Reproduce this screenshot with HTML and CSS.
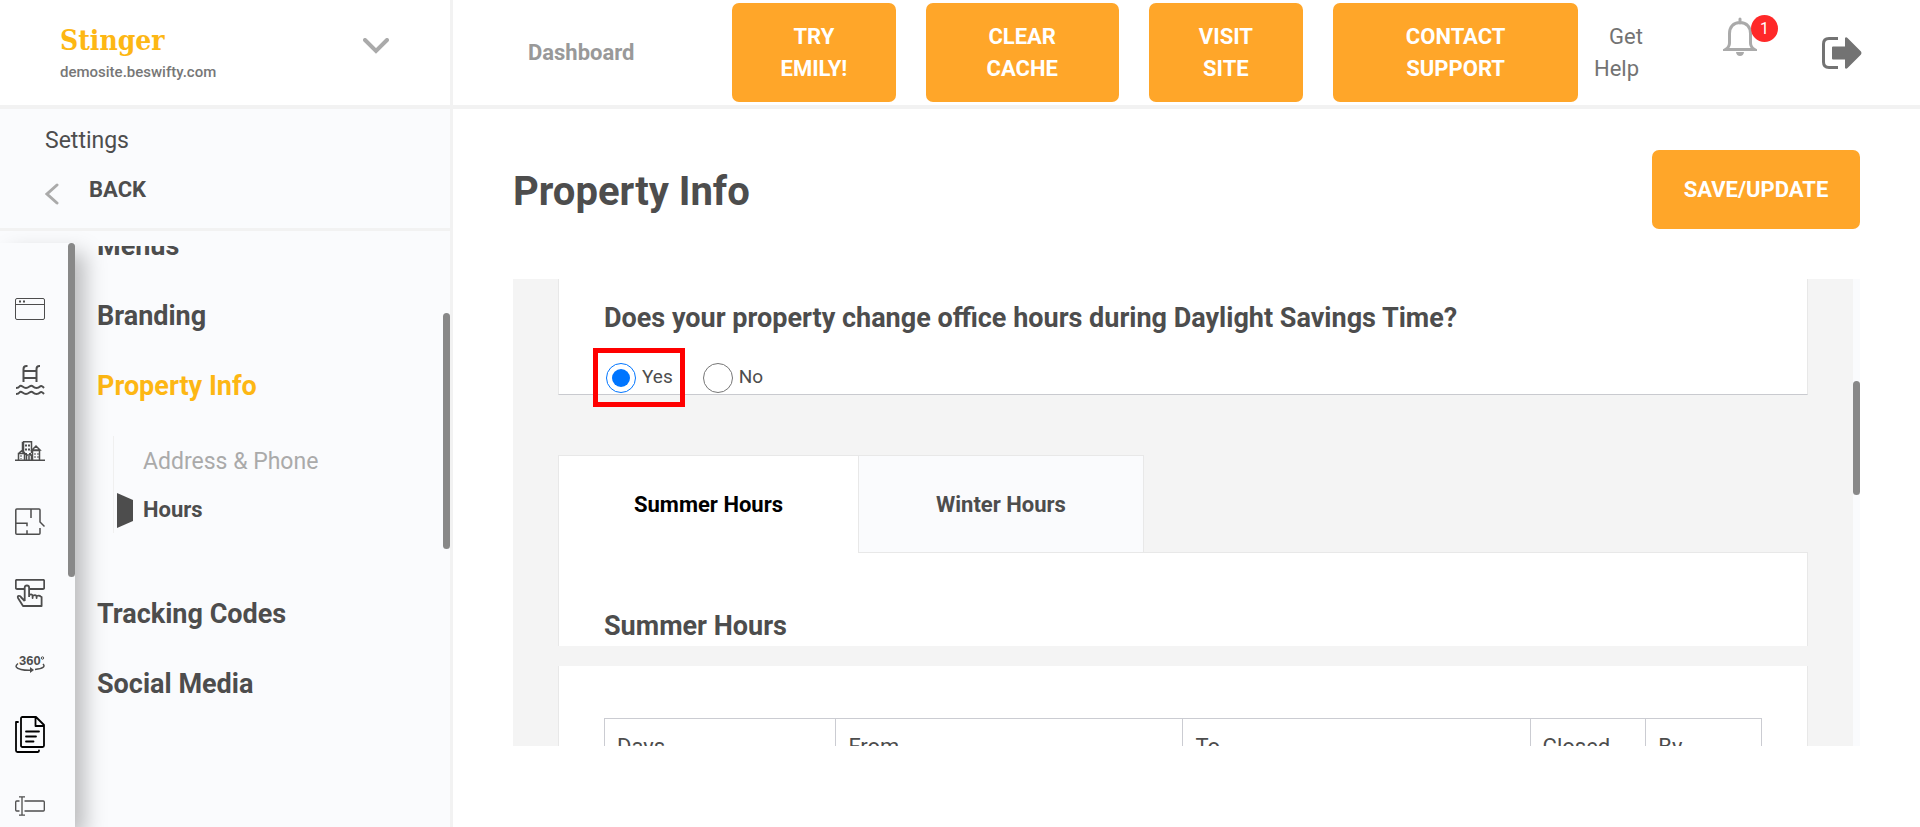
FILE: index.html
```html
<!DOCTYPE html>
<html lang="en">
<head>
    <meta charset="UTF-8">
    <meta name="viewport" content="width=device-width, initial-scale=1.0">
    <title>Property Info</title>
    <link rel="stylesheet" href="styles.css">
</head>
<body>
    <aside class="sidebar">
        <div class="site">
            <div>
                <div class="site-name">Stinger</div>
                <div class="site-url">demosite.beswifty.com</div>
            </div>
            <button class="icon-btn" aria-label="Switch site">
                <svg width="26" height="16" viewBox="0 0 26 16"><path d="M2 2l11 11L24 2" fill="none" stroke="#aaa" stroke-width="4" stroke-linecap="round"/></svg>
            </button>
        </div>
        <div class="settings">
            <div class="settings-label">Settings</div>
            <a class="back" href="#">
                <svg width="14" height="22" viewBox="0 0 14 22"><path d="M12 2L2 11l10 9" fill="none" stroke="#aaa" stroke-width="3" stroke-linecap="round"/></svg>
                <span>BACK</span>
            </a>
        </div>
        <div class="side-body">
            <nav class="rail">
                <a href="#" aria-label="Pages">
                    <svg width="30" height="22" viewBox="0 0 30 22" fill="none" stroke="#4d4d4d"><rect x=".5" y=".5" width="29" height="21" rx="1.5"/><path d="M1 6.5h28"/><path d="M4 3.5h2M8 3.5h2" stroke-width="2"/></svg>
                </a>
                <a href="#" aria-label="Amenities">
                    <svg width="30" height="30" viewBox="0 0 30 30" fill="none" stroke="#4d4d4d" stroke-width="2"><path d="M8.500 17V4q0-3 3-3h1M21.500 17V4q0-3 3-3h.5M9 6h12M9 13h12"/><path d="M1 23q2.500 0 3.500-1.500t3 0 3.500 1.500 3.500-1.500 3.500 0 3.500 1.500 3.500-1.500 4 1.500M1 29q2.500 0 3.500-1.500t3 0 3.500 1.500 3.500-1.500 3.500 0 3.500 1.500 3.500-1.500 4 1.500"/></svg>
                </a>
                <a href="#" aria-label="Neighborhood">
                    <svg width="30" height="20" viewBox="0 0 30 20" fill="none" stroke="#4d4d4d"><path d="M0 19.500h30" stroke-width="2"/><path d="M7.500 11V1.500h1V11M8 .7h8.500V12" stroke-width="1.500"/><path d="M10 4.500h5M10 8.500h5M11 12v2M15 12v2" stroke-width="2" stroke-dasharray="2 1"/><path d="M3.500 19v-6.500h6V19M4 12l2.500-2L10 12M17.500 19V9.500h7V19M17 9l4-4 4 4zM11.500 19v-5h5v5M14 15v4" stroke-width="1.500"/><path d="M6 14v4M20 12v6M23 12v6" stroke-dasharray="2 1"/></svg>
                </a>
                <a href="#" aria-label="Floor plans">
                    <svg width="30" height="28" viewBox="0 0 30 28" fill="none" stroke="#4d4d4d" stroke-width="1.500"><path d="M12 26.200v-4M7 26.200H1.800q-1 0-1-1V2q0-1 1-1H24q1 0 1 1v12l4.500 4.500M25 20v5.200q0 1-1 1H12M7 26.200h6M16 1v9M1 15.200h11v3"/></svg>
                </a>
                <a href="#" aria-label="Calls to action">
                    <svg width="30" height="28" viewBox="0 0 30 28" fill="none" stroke="#4d4d4d" stroke-width="1.800" stroke-linejoin="round"><path d="M9.500 10H2q-1.200 0-1.200-1.200V2Q.8.800 2 .8h26q1.200 0 1.200 1.200v6.800q0 1.200-1.200 1.200H14.500"/><path d="M9.700 22V8.500q0-2 2.200-2t2.200 2V18M14.100 18v-2q2.500-1.500 3.500.5V19v-2q3-2 4 .5V19v-2q3-1 4 .5l1 .5v9H8L3 19q-.8-2 1-2.200 1.500 0 2.300 1.700L9.700 22"/></svg>
                </a>
                <a href="#" aria-label="Virtual tours">
                    <svg width="30" height="18" viewBox="0 0 30 18"><text x="4" y="10" class="rail-text">360</text><circle cx="27.500" cy="3" r="1.200" fill="none" stroke="#4d4d4d"/><path d="M3 8.500Q-2 12.500 6 14.500q5 1.200 11 .7M20 14.500q12-1.500 8-5.500" fill="none" stroke="#4d4d4d" stroke-width="1.500"/><path d="M15 12l4 3-4 3z" fill="#4d4d4d"/></svg>
                </a>
                <a href="#" aria-label="Content">
                    <svg width="30" height="38" viewBox="0 0 30 38" fill="none" stroke="#000" stroke-width="1.800" stroke-linejoin="round" stroke-linecap="round"><path d="M7.500 1H21l8 8v20.500q0 1.500-1.500 1.500h-20Q6 31 6 29.500v-27Q6 1 7.500 1zM20.500 1v9H29M3 6H1v28.500Q1 36 2.500 36H23q1 0 1-1.500M11 15.500h13M11 20.500h10M11 25.500h7.500"/></svg>
                </a>
                <a href="#" aria-label="Forms">
                    <svg width="30" height="20" viewBox="0 0 30 20" fill="none" stroke="#4d4d4d"><path d="M4 .8h6M7 .8v18.400M4 19.200h6M4.500 5H1.700q-1 0-1 1v8q0 1 1 1h2.800M9.500 5h18.800q1 0 1 1v8q0 1-1 1H9.500" stroke-width="1.300"/></svg>
                </a>
                <span class="thumb rail-thumb"></span>
            </nav>
            <nav class="menu">
                <a href="#">Menus</a>
                <a href="#">Branding</a>
                <a class="active" href="#">Property Info</a>
                <div class="submenu">
                    <a href="#">Address &amp; Phone</a>
                    <a class="current" href="#">Hours</a>
                </div>
                <a href="#">Tracking Codes</a>
                <a href="#">Social Media</a>
            </nav>
            <span class="thumb menu-thumb"></span>
        </div>
    </aside>

    <div class="page">
        <header class="topbar">
            <a class="dashboard" href="#">Dashboard</a>
            <div class="actions">
                <button class="btn">TRY<br>EMILY!</button>
                <button class="btn">CLEAR<br>CACHE</button>
                <button class="btn">VISIT<br>SITE</button>
                <button class="btn">CONTACT<br>SUPPORT</button>
            </div>
            <a class="help" href="#">Get Help</a>
            <button class="icon-btn bell" aria-label="Notifications">
                <svg width="34" height="40" viewBox="0 0 34 40"><path d="M17 2v4M17 5.500c-7 0-10.500 5-10.500 11V26q0 4-4 6.500h29q-4-2.500-4-6.500v-9.500c0-6-3.500-11-10.500-11z" fill="none" stroke="#aaa" stroke-width="3" stroke-linecap="round"/><path d="M13 35h8q-.5 4-4 4t-4-4z" fill="#aaa"/></svg>
                <span class="badge">1</span>
            </button>
            <button class="icon-btn" aria-label="Log out">
                <svg width="40" height="34" viewBox="0 0 40 34"><path d="M16 2.500H7Q1.500 2.500 1.500 8v18q0 5.500 5.500 5.500h9" fill="none" stroke="#737373" stroke-width="3"/><path d="M11 10.500h12V2q1-1.500 2.500 0L39 15.500q1 1.500 0 3L25.500 32q-1.500 1.500-2.500 0v-8.500H11q-1 0-1-1v-11q0-1 1-1z" fill="#737373"/></svg>
            </button>
        </header>

        <main class="content">
            <div class="title-row">
                <h1>Property Info</h1>
                <button class="btn save">SAVE/UPDATE</button>
            </div>
            <div class="panel">
                <div class="panel-inner">
                    <section class="card question">
                        <h2>Does your property change office hours during Daylight Savings Time?</h2>
                        <div class="radios">
                            <label class="marked"><input type="radio" name="dst" checked>Yes</label>
                            <label><input type="radio" name="dst">No</label>
                        </div>
                    </section>
                    <div class="tabs">
                        <button class="tab selected">Summer Hours</button>
                        <button class="tab">Winter Hours</button>
                        <div class="tabs-rest"></div>
                    </div>
                    <section class="card season">
                        <h2>Summer Hours</h2>
                    </section>
                    <section class="card hours">
                        <table>
                            <thead>
                                <tr>
                                    <th class="col-day">Days</th>
                                    <th class="col-time">From</th>
                                    <th class="col-time">To</th>
                                    <th class="col-flag">Closed</th>
                                    <th class="col-flag">By</th>
                                </tr>
                            </thead>
                        </table>
                    </section>
                </div>
                <span class="thumb panel-thumb"></span>
            </div>
        </main>
    </div>
</body>
</html>
```
FILE: styles.css
```css
* {
    box-sizing: border-box;
}
body {
    margin: 0;
    height: 100vh;
    display: flex;
    overflow: hidden;
    font-family: Roboto, "Liberation Sans", sans-serif;
    font-size: 22px;
    line-height: 32px;
    color: #4d4d4d;
    background: #fff;
}
a {
    color: inherit;
    text-decoration: none;
}
button {
    font-family: inherit;
    cursor: pointer;
}
h1, h2 {
    margin: 0;
}
h2 {
    font-size: 27px;
    font-weight: bold;
}
svg {
    display: block;
}
.icon-btn {
    padding: 0;
    border: none;
    background: none;
}
.thumb {
    position: absolute;
    width: 7px;
    border-radius: 4px;
    background: #888;
}

/* sidebar */
.sidebar {
    flex: 0 0 453px;
    display: flex;
    flex-direction: column;
    border-right: 3px solid #f2f2f2;
    background: #fafbfd;
}
.site {
    height: 109px;
    padding: 22px 61px 0 60px;
    display: flex;
    justify-content: space-between;
    align-items: flex-start;
    border-bottom: 4px solid #f2f2f2;
    background: #fff;
}
.site .icon-btn {
    margin-top: 16px;
}
.site-name {
    font-family: "DejaVu Serif Condensed", "DejaVu Serif", serif;
    font-size: 28px;
    line-height: 38px;
    font-weight: bold;
    color: #fdb714;
}
.site-url {
    font-size: 15px;
    line-height: 24px;
    font-weight: 500;
    color: #777;
}
.settings {
    height: 122px;
    padding: 16px 45px 0;
    border-bottom: 3px solid #f2f2f2;
}
.settings-label {
    font-size: 23px;
}
.back {
    display: flex;
    align-items: center;
    gap: 30px;
    margin-top: 17px;
    font-weight: bold;
}
.back svg {
    margin-top: 8px;
}
.side-body {
    position: relative;
    flex: 1;
    min-height: 0;
    display: flex;
    padding-top: 12px;
    overflow: hidden;
}
.rail {
    position: relative;
    flex: 0 0 75px;
    padding: 30px 15px 0;
    background: #fafbfd;
    box-shadow: 10px 10px 20px rgba(0, 0, 0, 0.25);
}
.rail a {
    height: 71px;
    display: flex;
    align-items: center;
}
.rail-text {
    font-family: "Liberation Sans", sans-serif;
    font-size: 13px;
    font-weight: bold;
    fill: #4d4d4d;
}
.rail-thumb {
    top: 0;
    right: 0;
    height: 334px;
}
.menu {
    flex: 1;
    margin-top: 3px;
    padding-left: 22px;
    overflow: hidden;
    font-size: 27px;
    font-weight: bold;
}
.menu > a {
    display: block;
    margin-bottom: 38px;
}
.menu > a:first-child {
    margin-top: -16px;
}
.menu .active {
    color: #fdb714;
    margin-bottom: 34px;
}
.submenu {
    margin: 0 0 65px 16px;
    padding: 10px 0 0 29px;
    height: 97px;
    border-left: 1px solid #f0f0f0;
    font-size: 23px;
    font-weight: normal;
    color: #aaa;
}
.submenu a {
    display: block;
    margin-bottom: 16px;
}
.submenu .current {
    position: relative;
    font-size: 22px;
    font-weight: bold;
    color: #4d4d4d;
}
.submenu .current::before {
    content: "";
    position: absolute;
    left: -26px;
    top: -1px;
    width: 16px;
    height: 35px;
    background: #4d4d4d;
    clip-path: polygon(0 0, 100% 20%, 100% 80%, 0 100%);
}
.menu-thumb {
    top: 82px;
    right: 0;
    height: 236px;
}

/* top bar */
.page {
    flex: 1;
    min-width: 0;
    display: flex;
    flex-direction: column;
}
.topbar {
    height: 109px;
    padding: 0 58px 0 75px;
    display: flex;
    align-items: center;
    border-bottom: 4px solid #f2f2f2;
}
.dashboard {
    margin-right: auto;
    font-weight: bold;
    color: #999;
}
.actions {
    flex: 0 1 846px;
    display: grid;
    grid-template-columns: 164fr 193fr 155fr 245fr;
    gap: 30px;
}
.btn {
    height: 99px;
    padding: 0;
    border: none;
    border-radius: 7px;
    font-size: 22px;
    line-height: 32px;
    font-weight: bold;
    color: #fff;
    background: #ffa629;
}
.help {
    width: 65px;
    margin-left: 16px;
    text-indent: 15px;
    color: #737373;
}
.bell {
    position: relative;
    margin: 0 65px 32px 64px;
}
.badge {
    position: absolute;
    top: -2px;
    left: 28px;
    width: 27px;
    height: 27px;
    border-radius: 50%;
    font-size: 16px;
    line-height: 27px;
    color: #fff;
    background: #ff2929;
}

/* content */
.content {
    flex: 1;
    min-height: 0;
    display: flex;
    flex-direction: column;
    padding: 41px 60px 81px;
}
.title-row {
    display: flex;
    justify-content: space-between;
    align-items: center;
    margin-bottom: 50px;
}
h1 {
    padding-top: 4px;
    font-size: 40px;
    line-height: 48px;
}
.save {
    width: 208px;
    height: 79px;
}
.panel {
    position: relative;
    flex: 1;
    min-height: 0;
    padding-right: 7px;
    overflow: hidden;
    background: #fafbfd;
}
.panel-inner {
    min-height: 100%;
    padding: 0 45px;
    background: #f4f4f4;
}
.panel-thumb {
    top: 102px;
    right: 0;
    height: 114px;
}
.card {
    padding: 0 45px;
    border: 1px solid #e8e8e8;
    border-width: 0 1px;
    background: #fff;
}
.question {
    height: 116px;
    padding-top: 23px;
    border-bottom: 1px solid #c9cacf;
}
.radios {
    display: flex;
    gap: 28px;
    margin-top: 29px;
    font-size: 19px;
}
.radios label {
    position: relative;
    display: flex;
    gap: 6px;
    line-height: 28px;
}
.radios input {
    width: 30px;
    height: 30px;
    margin: 0 0 0 2px;
}
.marked::after {
    content: "";
    position: absolute;
    inset: -15px -12px -14px -11px;
    border: 5px solid #f00;
}
.tabs {
    display: flex;
    margin-top: 60px;
}
.tab {
    height: 98px;
    padding: 0 77px;
    border: 1px solid #e8e8e8;
    border-left: none;
    font-size: 22px;
    font-weight: bold;
    color: #4d4d4d;
    background: #fafbfd;
}
.tab.selected {
    padding: 0 75px;
    border-left: 1px solid #e8e8e8;
    border-bottom: none;
    color: #000;
    background: #fff;
}
.tabs-rest {
    flex: 1;
    border-bottom: 1px solid #e8e8e8;
}
.season {
    height: 93px;
    padding-top: 57px;
}
.hours {
    margin-top: 20px;
    padding-top: 52px;
}
table {
    width: 100%;
    table-layout: fixed;
    border-collapse: collapse;
}
th {
    padding: 12px;
    border: 1px solid #cbccd2;
    text-align: left;
    font-size: 22px;
    font-weight: normal;
}
.col-day {
    width: 20%;
}
.col-time {
    width: 30%;
}
.col-flag {
    width: 10%;
}
```
